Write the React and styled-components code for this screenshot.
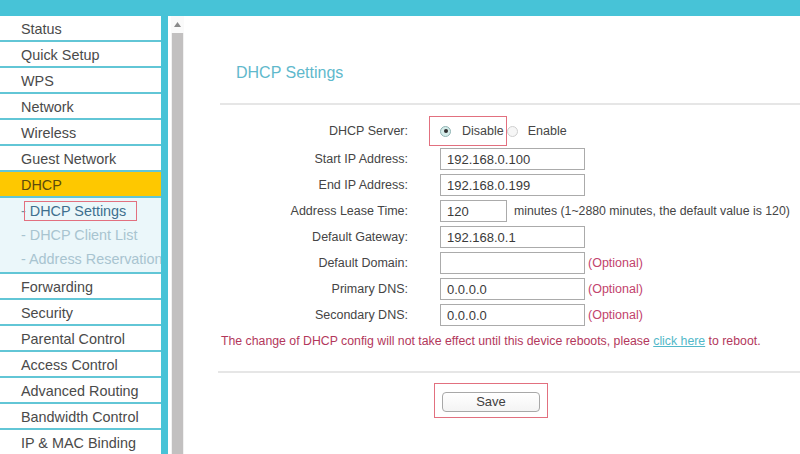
import React from 'react';
import styled, { createGlobalStyle } from 'styled-components';

const GlobalStyle = createGlobalStyle`
  html, body { margin: 0; padding: 0; background: #fff; }
  body {
    font-family: "Liberation Sans", Arial, Helvetica, sans-serif;
    overflow: hidden;
  }
`;

const TEAL = '#47c3d7';
const HILITE = '#e2707f';

const Page = styled.div`
  width: 800px;
  height: 454px;
  display: flex;
  flex-direction: column;
  overflow: hidden;
`;

const TopBar = styled.div`
  height: 16px;
  flex: none;
  background: ${TEAL};
`;

const Body = styled.div`
  flex: 1;
  display: flex;
  min-height: 0;
`;

const Sidebar = styled.nav`
  width: 168px;
  flex: none;
  box-sizing: border-box;
  border-right: 7px solid ${TEAL};
  overflow: hidden;
  background: #fff;
`;

const MenuItem = styled.div`
  height: 24px;
  line-height: 26px;
  padding-left: 21px;
  border-bottom: 2px solid #62c6d6;
  font-size: 14.4px;
  color: ${p => (p.$active ? '#5b4b0c' : '#4a4a4a')};
  background: ${p => (p.$active ? '#fec800' : '#fff')};
  white-space: nowrap;
`;

const SubMenu = styled.div`
  background: #ebf7fa;
  padding: 1px 0;
  border-bottom: 2px solid #62c6d6;
`;

const SubItem = styled.div`
  height: 24px;
  line-height: 24px;
  padding-left: 21px;
  font-size: 14.4px;
  color: #a8c4d0;
  white-space: nowrap;
  display: flex;
  align-items: center;
`;

const Dash = styled.span`
  color: #6f8fa2;
`;

const SubSelected = styled.span`
  margin-left: -2px;
  height: 18px;
  line-height: 18px;
  padding: 0 10px 0 5px;
  border: 1.5px solid ${HILITE};
  color: #3e6f8e;
`;

const ScrollBar = styled.div`
  width: 13px;
  margin-left: 3px;
  flex: none;
  display: flex;
  flex-direction: column;
  background: #f1f1f1;
`;

const ScrollArrow = styled.div`
  height: 17px;
  background: #fafafa;
  display: flex;
  align-items: center;
  justify-content: center;
`;

const ScrollThumb = styled.div`
  flex: 1;
  margin: 0 1px;
  background: #c2c0c0;
`;

const Content = styled.main`
  flex: 1;
  padding-left: 36px;
  min-width: 0;
`;

const Title = styled.h2`
  margin: 47px 0 0;
  padding-left: 16px;
  font-size: 16px;
  line-height: 20px;
  font-weight: normal;
  color: #5fb9cc;
`;

const Divider = styled.div`
  height: 2px;
  background: #e6e6e6;
  margin-top: ${p => p.$top}px;
  margin-left: ${p => p.$left || 0}px;
`;

const Form = styled.div`
  margin-top: 11px;
  display: flex;
  flex-direction: column;
`;

const Row = styled.div`
  display: flex;
  align-items: center;
  height: ${p => p.$h || 26}px;
`;

const Label = styled.div`
  width: 188px;
  flex: none;
  text-align: right;
  font-size: 12.5px;
  color: #454545;
  margin-right: 32px;
`;

const Input = styled.input`
  box-sizing: border-box;
  width: ${p => p.$w || 145}px;
  height: 22px;
  border: 1px solid #ababab;
  border-radius: 0;
  padding: 0 6px;
  font-family: inherit;
  font-size: 13px;
  color: #3a3a3a;
  background: #fff;
  outline: none;
`;

const Hint = styled.span`
  margin-left: 7px;
  font-size: 12.3px;
  color: #454545;
  white-space: nowrap;
`;

const Optional = styled.span`
  margin-left: 3px;
  font-size: 12.5px;
  color: #c2436d;
`;

const RadioBox = styled.div`
  margin-left: -11px;
  height: 30px;
  box-sizing: border-box;
  border: 1.5px solid ${HILITE};
  display: flex;
  align-items: center;
  padding: 0 2px 0 10px;
`;

const RadioOption = styled.label`
  display: flex;
  align-items: center;
  font-size: 12.5px;
  color: #454545;
`;

const RadioDot = styled.span`
  width: 11px;
  height: 11px;
  box-sizing: border-box;
  border-radius: 50%;
  border: 1px solid ${p => (p.$on ? '#8fb3b3' : '#cfcfcf')};
  background: ${p => (p.$on ? '#d5ecea' : '#f6f6f6')};
  display: inline-flex;
  align-items: center;
  justify-content: center;
  margin-right: ${p => p.$gap}px;

  &::after {
    content: '';
    width: 4px;
    height: 4px;
    border-radius: 50%;
    background: #2f2f2f;
    display: ${p => (p.$on ? 'block' : 'none')};
  }
`;

const Notice = styled.p`
  margin: 5px 0 0 1px;
  font-size: 12.3px;
  line-height: 16px;
  color: #b3385c;
  white-space: nowrap;
`;

const Link = styled.a`
  color: #52b8c9;
  text-decoration: underline;
`;

const SaveRow = styled.div`
  margin-top: 10px;
  padding-left: 214px;
  display: flex;
`;

const SaveBox = styled.div`
  border: 1.5px solid ${HILITE};
  padding: 7.5px 7px 5px;
`;

const SaveButton = styled.button`
  width: 98px;
  height: 20px;
  box-sizing: border-box;
  border: 1px solid #a8a8a8;
  border-radius: 4px;
  background: linear-gradient(#ffffff, #f4f4f4);
  font-family: inherit;
  font-size: 13px;
  color: #3f3f3f;
  padding: 0;
`;

const menuTop = ['Status', 'Quick Setup', 'WPS', 'Network', 'Wireless', 'Guest Network'];
const menuBottom = [
  'Forwarding',
  'Security',
  'Parental Control',
  'Access Control',
  'Advanced Routing',
  'Bandwidth Control',
  'IP & MAC Binding',
];

const fields = [
  { label: 'Start IP Address:', value: '192.168.0.100' },
  { label: 'End IP Address:', value: '192.168.0.199' },
  { label: 'Address Lease Time:', value: '120', width: 67, hint: 'minutes (1~2880 minutes, the default value is 120)' },
  { label: 'Default Gateway:', value: '192.168.0.1' },
  { label: 'Default Domain:', value: '', optional: true },
  { label: 'Primary DNS:', value: '0.0.0.0', optional: true },
  { label: 'Secondary DNS:', value: '0.0.0.0', optional: true },
];

export default function App() {
  return (
    <>
      <GlobalStyle />
      <Page>
        <TopBar />
        <Body>
          <Sidebar>
            {menuTop.map(m => <MenuItem key={m}>{m}</MenuItem>)}
            <MenuItem $active>DHCP</MenuItem>
            <SubMenu>
              <SubItem>
                <Dash>-</Dash>
                <SubSelected>DHCP Settings</SubSelected>
              </SubItem>
              <SubItem>- DHCP Client List</SubItem>
              <SubItem>- Address Reservation</SubItem>
            </SubMenu>
            {menuBottom.map(m => <MenuItem key={m}>{m}</MenuItem>)}
          </Sidebar>

          <ScrollBar>
            <ScrollArrow>
              <svg width="7" height="5" viewBox="0 0 7 5">
                <polygon points="3.5,0 7,5 0,5" fill="#8a8a8a" />
              </svg>
            </ScrollArrow>
            <ScrollThumb />
          </ScrollBar>

          <Content>
            <Title>DHCP Settings</Title>
            <Divider $top={20} />

            <Form>
              <Row $h={30}>
                <Label>DHCP Server:</Label>
                <RadioBox>
                  <RadioOption>
                    <RadioDot $on $gap={11} />
                    Disable
                  </RadioOption>
                </RadioBox>
                <RadioOption>
                  <RadioDot $gap={10} />
                  Enable
                </RadioOption>
              </Row>

              {fields.map(f => (
                <Row key={f.label}>
                  <Label>{f.label}</Label>
                  <Input $w={f.width} defaultValue={f.value} />
                  {f.hint && <Hint>{f.hint}</Hint>}
                  {f.optional && <Optional>(Optional)</Optional>}
                </Row>
              ))}
            </Form>

            <Notice>
              The change of DHCP config will not take effect until this device reboots, please{' '}
              <Link href="#reboot">click here</Link> to reboot.
            </Notice>

            <Divider $top={22} $left={-2} />

            <SaveRow>
              <SaveBox>
                <SaveButton type="button">Save</SaveButton>
              </SaveBox>
            </SaveRow>
          </Content>
        </Body>
      </Page>
    </>
  );
}
